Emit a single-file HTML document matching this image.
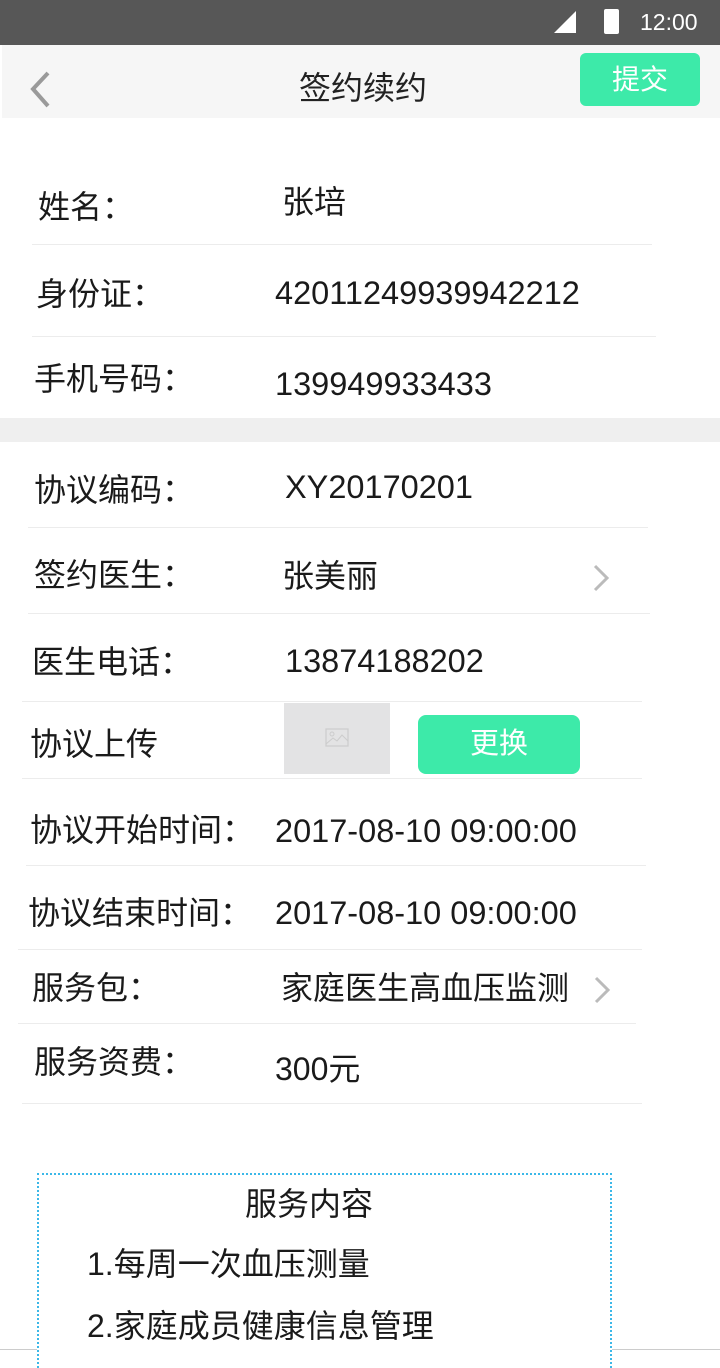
<!DOCTYPE html>
<html style="width:720px;height:1368px;overflow:hidden"><head><meta charset="utf-8"><style>
*{margin:0;padding:0;box-sizing:border-box}
body{width:720px;height:1368px;overflow:hidden;background:#fff;position:relative;font-family:"Liberation Sans","Noto Sans CJK SC",sans-serif;color:#1a1a1a}
.t{position:absolute;font-size:32px;line-height:32px;white-space:nowrap}
.n{font-size:32.5px}
.l{position:absolute;height:1px;background:#ececec}
</style></head><body>
<div style="position:absolute;left:0;top:0;width:720px;height:45px;background:#575757"></div>
<svg style="position:absolute;left:552px;top:9px" width="26" height="26"><polygon points="24,2 24,24 2,24" fill="#fff"/></svg>
<div style="position:absolute;left:604px;top:9px;width:15px;height:25px;background:#fff;border-radius:2px"></div>
<div class="t" style="left:640px;top:9px;font-size:23px;line-height:26px;color:#fff">12:00</div>
<div style="position:absolute;left:2px;top:45px;width:718px;height:73px;background:#f6f6f6"></div>
<svg style="position:absolute;left:26px;top:70px" width="30" height="40"><polyline points="22,3 7,19 22,36" fill="none" stroke="#9a9a9a" stroke-width="4"/></svg>
<div class="t" style="left:299px;top:72px;color:#222">签约续约</div>
<div style="position:absolute;left:580px;top:53px;width:120px;height:53px;background:#3deaa9;border-radius:6px;color:#fff;font-size:28px;line-height:53px;text-align:center">提交</div>

<div class="t" style="left:38px;top:191px">姓名：</div><div class="t" style="left:282px;top:186px">张培</div>
<div class="l" style="left:32px;top:244px;width:620px"></div>
<div class="t" style="left:36px;top:278px">身份证：</div><div class="t n" style="left:275px;top:277px">42011249939942212</div>
<div class="l" style="left:32px;top:336px;width:624px"></div>
<div class="t" style="left:34px;top:363px">手机号码：</div><div class="t n" style="left:275px;top:368px">139949933433</div>
<div style="position:absolute;left:0;top:418px;width:720px;height:24px;background:#efefef"></div>

<div class="t" style="left:34px;top:474px">协议编码：</div><div class="t n" style="left:285px;top:471px">XY20170201</div>
<div class="l" style="left:28px;top:527px;width:620px"></div>
<div class="t" style="left:34px;top:559px">签约医生：</div><div class="t" style="left:282px;top:560px">张美丽</div>
<svg style="position:absolute;left:592px;top:564px" width="20" height="28"><polyline points="3,2 15,14 3,26" fill="none" stroke="#bbb" stroke-width="3"/></svg>
<div class="l" style="left:28px;top:613px;width:622px"></div>
<div class="t" style="left:32px;top:646px">医生电话：</div><div class="t n" style="left:285px;top:645px">13874188202</div>
<div class="l" style="left:22px;top:701px;width:620px"></div>
<div class="t" style="left:30px;top:728px">协议上传</div>
<div style="position:absolute;left:284px;top:703px;width:106px;height:71px;background:#e3e3e4"></div>
<svg style="position:absolute;left:325px;top:728px" width="24" height="20"><rect x="1" y="1" width="22" height="17" fill="none" stroke="#ccc" stroke-width="1.2"/><circle cx="7" cy="6" r="2" fill="none" stroke="#ccc"/><polyline points="1,16 8,10 12,13 17,7 23,13" fill="none" stroke="#ccc"/></svg>
<div style="position:absolute;left:418px;top:715px;width:162px;height:59px;background:#3deaa9;border-radius:8px;color:#fff;font-size:29px;line-height:59px;text-align:center">更换</div>
<div class="l" style="left:22px;top:778px;width:620px"></div>
<div class="t" style="left:30px;top:814px">协议开始时间：</div><div class="t n" style="left:275px;top:815px">2017-08-10 09:00:00</div>
<div class="l" style="left:26px;top:865px;width:620px"></div>
<div class="t" style="left:28px;top:897px">协议结束时间：</div><div class="t n" style="left:275px;top:897px">2017-08-10 09:00:00</div>
<div class="l" style="left:18px;top:949px;width:624px"></div>
<div class="t" style="left:32px;top:972px">服务包：</div><div class="t" style="left:281px;top:972px">家庭医生高血压监测</div>
<svg style="position:absolute;left:593px;top:976px" width="20" height="28"><polyline points="3,2 15,14 3,26" fill="none" stroke="#bbb" stroke-width="3"/></svg>
<div class="l" style="left:18px;top:1023px;width:618px"></div>
<div class="t" style="left:34px;top:1046px">服务资费：</div><div class="t" style="left:275px;top:1053px">300元</div>
<div class="l" style="left:22px;top:1103px;width:620px"></div>

<div style="position:absolute;left:0;top:1349px;width:720px;height:1px;background:#ccc"></div>
<div style="position:absolute;left:37px;top:1173px;width:575px;height:195px;border:2px dotted #3cb8e8;border-bottom:none;background:#fff"></div>
<div class="t" style="left:245px;top:1188px">服务内容</div>
<div class="t" style="left:87px;top:1248px">1.每周一次血压测量</div>
<div class="t" style="left:87px;top:1310px">2.家庭成员健康信息管理</div>
</body></html>
